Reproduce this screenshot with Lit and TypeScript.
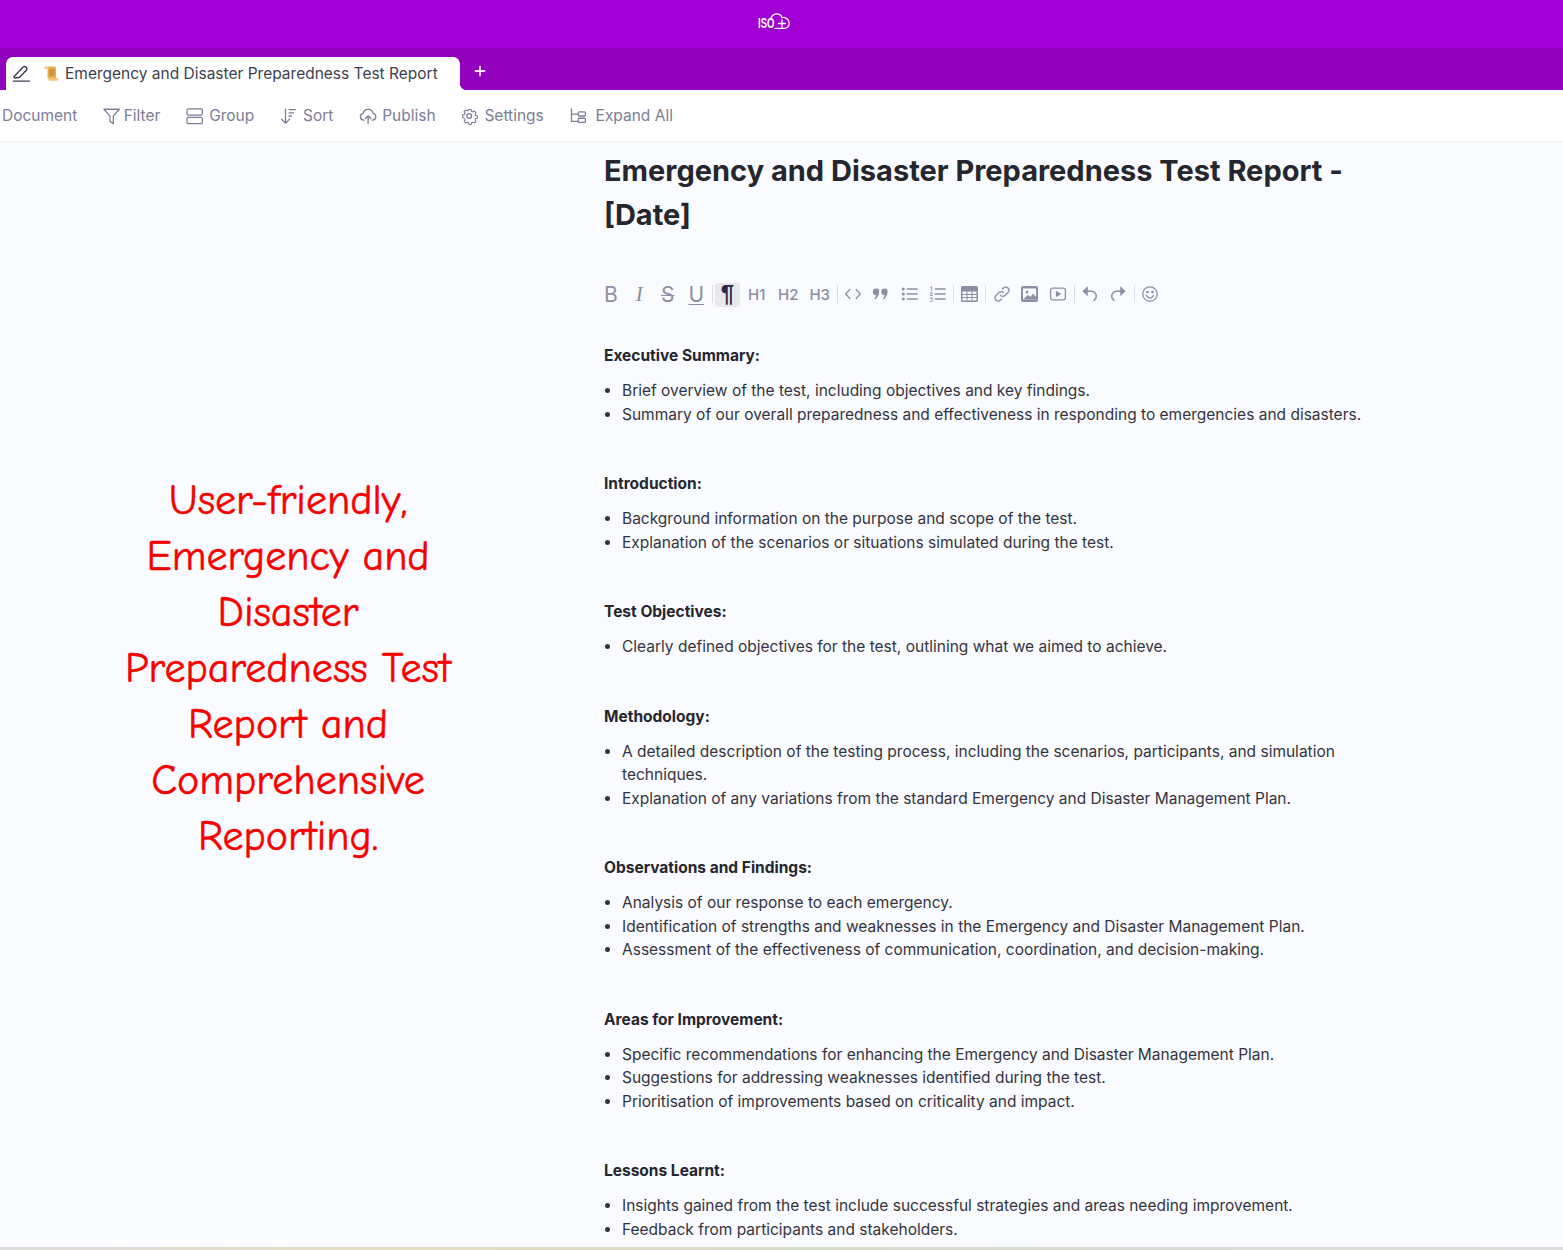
import { LitElement, html, css, svg } from "lit";
import { customElement } from "lit/decorators.js";

const sections = [
  { h: "Executive Summary:", items: ["Brief overview of the test, including objectives and key findings.", "Summary of our overall preparedness and effectiveness in responding to emergencies and disasters."] },
  { h: "Introduction:", items: ["Background information on the purpose and scope of the test.", "Explanation of the scenarios or situations simulated during the test."] },
  { h: "Test Objectives:", items: ["Clearly defined objectives for the test, outlining what we aimed to achieve."] },
  { h: "Methodology:", items: ["A detailed description of the testing process, including the scenarios, participants, and simulation techniques.", "Explanation of any variations from the standard Emergency and Disaster Management Plan."] },
  { h: "Observations and Findings:", items: ["Analysis of our response to each emergency.", "Identification of strengths and weaknesses in the Emergency and Disaster Management Plan.", "Assessment of the effectiveness of communication, coordination, and decision-making."] },
  { h: "Areas for Improvement:", items: ["Specific recommendations for enhancing the Emergency and Disaster Management Plan.", "Suggestions for addressing weaknesses identified during the test.", "Prioritisation of improvements based on criticality and impact."] },
  { h: "Lessons Learnt:", items: ["Insights gained from the test include successful strategies and areas needing improvement.", "Feedback from participants and stakeholders."] },
];

const ic = (w: number, body: unknown, vb = "0 0 20 20", sw = 1.4) => html`<svg class="ic" width=${w} height=${w} viewBox=${vb} fill="none" stroke="currentColor" stroke-width=${sw} stroke-linecap="round" stroke-linejoin="round">${body}</svg>`;

const icons = {
  filter: svg`<path d="M2 2.500h17l-6.600 7.600v8.400l-3.800-2.300v-6.100z"/>`,
  group: svg`<rect x="2" y="2" width="17" height="7" rx="1.400"/><rect x="2" y="11.500" width="17" height="7" rx="1.400"/>`,
  sort: svg`<path d="M7 2.500v15.500M2.500 13.500 7 18l4.500-4.500M11 3h7M11 6.500h5M11 10h2.500"/>`,
  publish: svg`<path d="M6.500 14.500H6a3.800 3.800 0 0 1-.6-7.500 5.800 5.800 0 0 1 11.200 0 3.800 3.800 0 0 1-.6 7.500h-.5M11 18.500v-8.500M8 12.800l3-3 3 3"/>`,
  settings: svg`<circle cx="10" cy="10" r="2.600"/><path d="M8.600 2h2.800l.4 2.200 1.500.7 2-1 2 2-1.100 1.900.7 1.600 2.100.5v2.800l-2.100.5-.7 1.600 1.100 1.900-2 2-2-1-1.500.7-.4 2.100H8.600l-.4-2.100-1.500-.7-2 1-2-2 1.100-1.900-.7-1.600L.9 11.400V8.600L3 8.100l.7-1.600-1.100-1.900 2-2 2 1 1.500-.7z" transform="translate(2 1) scale(.9)"/>`,
  expand: svg`<path d="M2.500 2v14h7M2.500 8h7"/><rect x="10" y="5.500" width="8" height="4.500" rx="1"/><rect x="10" y="12.500" width="8" height="4.500" rx="1"/>`,
  code: svg`<path d="M6.500 5 1.800 10l4.700 5M13.500 5l4.700 5-4.700 5"/>`,
  quote: svg`<path d="M4.600 4a3 3 0 0 1 3.400 3c0 3.500-1.500 7-4.300 9l-1-1c1-1 1.600-2 1.900-3.600A3.600 3.600 0 0 1 4.600 4zM14 4a3 3 0 0 1 3.400 3c0 3.500-1.500 7-4.300 9l-1-1c1-1 1.600-2 1.900-3.600A3.600 3.600 0 0 1 14 4z" fill="currentColor" stroke="none"/>`,
  ul: svg`<path d="M7 4.500h11M7 10h11M7 15.500h11" stroke-width="1.600"/><circle cx="2.500" cy="4.500" r="1" fill="currentColor"/><circle cx="2.500" cy="10" r="1" fill="currentColor"/><circle cx="2.500" cy="15.500" r="1" fill="currentColor"/>`,
  ol: svg`<path d="M7 4.500h11M7 10h11M7 15.500h11" stroke-width="1.600"/><path d="M1.800 2.500 3 1.800v4.400M1.500 8.800h2.400l-2.400 3h2.500M1.500 14.500h2.500l-1.200 1.300 1.200 1.200-.4 1H1.500" stroke-width="1"/>`,
  link: svg`<path d="M8.300 11.700a3.600 3.600 0 0 0 5.100 0l3.300-3.300a3.600 3.600 0 0 0-5.100-5.100l-1.200 1.200M11.700 8.300a3.600 3.600 0 0 0-5.100 0l-3.300 3.300a3.600 3.600 0 0 0 5.100 5.100l1.200-1.200"/>`,
  video: svg`<rect x="1.800" y="3.500" width="16.400" height="13" rx="2.200"/><path d="m8.300 7.500 4.200 2.500-4.200 2.500z" fill="currentColor"/>`,
  undo: svg`<path d="M3 7h8.500a5.500 5.500 0 0 1 5.500 5.500c0 2-1 3.700-2.500 4.700" stroke-width="1.700"/><path d="M7.500 1.500v11L1.500 7z" fill="currentColor" stroke="none"/>`,
  redo: svg`<path d="M17 7H8.500A5.500 5.500 0 0 0 3 12.500c0 2 1 3.700 2.500 4.700" stroke-width="1.700"/><path d="M12.500 1.500v11l6-5.500z" fill="currentColor" stroke="none"/>`,
  smile: svg`<circle cx="10" cy="10" r="8"/><path d="M6 11.500c1 2 2.400 3 4 3s3-1 4-3"/><circle cx="7.200" cy="7.800" r=".8" fill="currentColor"/><circle cx="12.800" cy="7.800" r=".8" fill="currentColor"/>`,
};

@customElement("app-root")
export class AppRoot extends LitElement {
  static styles = css`
    :host { display: block; height: 1250px; overflow: hidden; font-family: Inter, "Liberation Sans", sans-serif; }
    .page { height: 1250px; display: flex; flex-direction: column; background: #fafbfe; }
    .brand { height: 48px; flex: none; background: #a100d4; display: flex; align-items: center; justify-content: center; color: #fff; }
    .logo { display: flex; align-items: flex-end; margin: -6px 0 0 -16px; height: 16px; }
    .logo b { display: inline-block; width: 15px; font: 700 14px/11px "Liberation Sans", sans-serif; transform: scaleX(.68); transform-origin: 0 50%; height: 11px; }
    .logo svg { margin-left: -3px; }
    .tabs { height: 42px; flex: none; background: #9300be; display: flex; align-items: flex-end; padding-left: 6px; }
    .tab { width: 454px; height: 33px; box-sizing: border-box; background: #fff; border-radius: 7px 7px 0 0; display: flex; align-items: center; padding-left: 6px; color: #3d3f4d; font-size: 15.500px; position: relative; white-space: nowrap; }
    .tab::after { content: ""; position: absolute; right: -7px; bottom: 0; width: 7px; height: 7px; background: radial-gradient(circle at 100% 0, transparent 7px, #fff 7.500px); }
    .tab .pen { margin-right: 12px; color: #3d3f4d; }
    .tab .scroll { margin-right: 5px; }
    .add { margin: 0 0 7px 12px; color: #f3e4fa; height: 24px; }
    .menu { height: 52px; flex: none; box-sizing: border-box; background: #fff; border-bottom: 1px solid #f0f1f3; display: flex; align-items: center; gap: 26.800px; padding-left: 2px; color: #7b7d96; font-size: 15.500px; }
    .mi { display: flex; align-items: center; gap: 4px; white-space: nowrap; }
    .mi.tight { gap: 1.500px; }
    .mi.wide { gap: 7px; }
    .ic { overflow: visible; flex: none; }
    .main { flex: 1; min-height: 0; display: grid; grid-template-columns: 576px 1fr; }
    .pitch { display: flex; justify-content: center; padding-top: 331px; }
    .pitch p { margin: 0; width: 360px; height: 392px; text-align: center; color: #f60000; font: 400 42px/56px "Comic Sans MS", "Comic Neue", cursive; -webkit-text-stroke: .5px #f60000; }
    .doc { padding-left: 28px; width: 790px; color: #33343f; font-size: 15.500px; line-height: 23.500px; }
    h1 { margin: 7px 0 0; font-size: 29px; line-height: 43.500px; font-weight: 700; color: #25262e; }
    .bar { display: flex; align-items: flex-start; height: 26px; margin: 46px 0 0 -7.500px; color: #8d8ea3; }
    .bt { width: 28.500px; height: 26px; box-sizing: border-box; padding-bottom: 2px; flex: none; display: flex; align-items: center; justify-content: center; font: 400 21px/1 Inter, sans-serif; border-radius: 3px; }
    .bt.ib { width: 28.300px; }
    .bt.h { width: 31.500px; font-size: 15px; font-weight: 500; }
    .bt.on { background: #e8e8ec; color: #2b2a45; font: 700 24px/1 "Liberation Sans", sans-serif; width: 25px; height: 24px; margin: 1px 1px 0; padding-bottom: 3px; }
    .ital { font-family: "Liberation Serif", serif; font-style: italic; }
    .strike { text-decoration: line-through; text-decoration-thickness: 1px; }
    .under { text-decoration: underline; text-decoration-thickness: 1px; text-underline-offset: 2px; }
    .sep { width: 1px; height: 18px; margin: 3px 1.250px 0; background: #dcdde3; flex: none; }
    h2 { margin: 36px 0 0; font-size: 15.500px; line-height: 23.500px; font-weight: 700; color: #25262e; }
    .sec + .sec h2 { margin-top: 46px; }
    ul { margin: 11.500px 0 0; padding: 0 0 0 18px; }
    .line { height: 3px; flex: none; background: linear-gradient(90deg, #dcdcdc, #e4dcc0 25%, #d8dccb 50%, #dcdcdc); }
  `;

  menuItem(label: string, icon: unknown, cls = "") {
    return html`<span class="mi ${cls}">${ic(18, icon, "2 0 20 20")}${label}</span>`;
  }

  render() {
    const sep = html`<span class="sep"></span>`;
    const b = (x: unknown) => html`<span class="bt ib">${ic(18, x)}</span>`;
    return html`<div class="page">
      <header class="brand"><span class="logo"><b>ISO</b><svg width="20" height="16" viewBox="0 0 20 16" fill="none" stroke="#fff" stroke-width="1.300" stroke-linecap="round" stroke-linejoin="round"><path d="M1 5C2 2.500 4.200.8 6.800.8c2.500 0 4.400 1.500 5 3.700 3.500-.7 7.300 1.800 7.400 5.500.1 3.200-2.200 5.400-5 5.400H5"/><path d="M8.500 10.500h7M12 7v7"/></svg></span></header>
      <nav class="tabs">
        <div class="tab">
          <svg class="pen" width="19" height="19" viewBox="0 0 20 20" fill="none" stroke="currentColor" stroke-width="1.500" stroke-linecap="round" stroke-linejoin="round"><path d="M2 13.500 11.500 3.500c1-1 2.400-1 3.400 0s1 2.300 0 3.300L8 14l-5 .8zM1.500 18h17"/></svg>
          <svg class="scroll" width="17" height="17" viewBox="0 0 17 17"><path d="M2 1.500h9.500c1 0 1.500.8 1.500 1.700V13H4.500V3.200C4.500 2.300 3.500 1.500 2 1.500z" fill="#e8b24a"/><path d="M6 4h5.500v7H6z" fill="#d2933a"/><path d="M2 1.500C1 1.500.8 3.800 2.500 4h2V3z" fill="#f2c77c"/><path d="M5.500 13H15.500c0 1.800-.8 2.800-2 2.800H6.500c-1 0-1.500-1.300-1-2.800z" fill="#f2c77c"/></svg>
          Emergency and Disaster Preparedness Test Report
        </div>
        <svg class="add" width="16" height="24" viewBox="0 0 16 24" fill="none" stroke="currentColor" stroke-width="1.800" stroke-linecap="round"><path d="M8 7.500v9M3.500 12h9"/></svg>
      </nav>
      <div class="menu">
        <span class="mi">Document</span>
        ${this.menuItem("Filter", icons.filter, "tight")}
        ${this.menuItem("Group", icons.group)}
        ${this.menuItem("Sort", icons.sort)}
        ${this.menuItem("Publish", icons.publish)}
        ${this.menuItem("Settings", icons.settings)}
        ${this.menuItem("Expand All", icons.expand, "wide")}
      </div>
      <div class="main">
        <aside class="pitch"><p>User-friendly, Emergency and Disaster Preparedness Test Report and Comprehensive Reporting.</p></aside>
        <article class="doc">
          <h1>Emergency and Disaster Preparedness Test Report - [Date]</h1>
          <div class="bar">
            <span class="bt">B</span><span class="bt ital">I</span><span class="bt"><span class="strike">S</span></span><span class="bt"><span class="under">U</span></span>${sep}
            <span class="bt on">¶</span>
            <span class="bt h">H1</span><span class="bt h">H2</span><span class="bt h">H3</span>${sep}
            ${b(icons.code)}${b(icons.quote)}
            ${b(icons.ul)}${b(icons.ol)}${sep}
            <span class="bt ib"><svg width="17" height="16" viewBox="0 0 17 16"><path d="M1.500 0h14A1.500 1.500 0 0 1 17 1.500v13a1.500 1.500 0 0 1-1.500 1.500h-14A1.500 1.500 0 0 1 0 14.500v-13A1.500 1.500 0 0 1 1.500 0z" fill="currentColor"/><path d="M1.500 5.500h14v9h-14z" fill="#fafbfe"/><path d="M1 8.500h15M1 11.500h15M6 5v10M11 5v10" stroke="currentColor"/></svg></span>${sep}
            ${b(icons.link)}
            <span class="bt ib"><svg width="17" height="16" viewBox="0 0 17 16"><rect width="17" height="16" rx="2" y="0" fill="currentColor"/><rect x="2" y="2.500" width="13" height="11" fill="#fafbfe"/><circle cx="6" cy="6" r="1.500" fill="currentColor"/><path d="M2 13.500 7 9l2.500 2 2.500-3.500 3 3.500v2.500z" fill="currentColor"/></svg></span>
            ${b(icons.video)}${sep}
            ${b(icons.undo)}${b(icons.redo)}${sep}
            ${b(icons.smile)}
          </div>
          ${sections.map((s) => html`<section class="sec"><h2>${s.h}</h2><ul>${s.items.map((i) => html`<li>${i}</li>`)}</ul></section>`)}
        </article>
      </div>
      <div class="line"></div>
    </div>`;
  }
}
